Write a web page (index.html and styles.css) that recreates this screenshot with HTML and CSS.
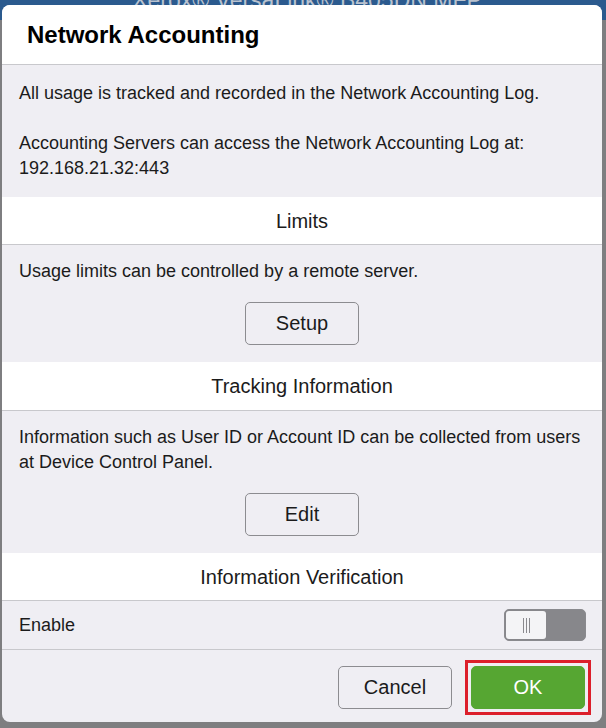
FILE: index.html
```html
<!DOCTYPE html>
<html lang="en">
<head>
    <meta charset="UTF-8">
    <meta name="viewport" content="width=device-width, initial-scale=1.0">
    <title>Network Accounting</title>
    <link rel="stylesheet" href="styles.css">
</head>
<body>
<header class="app-bar">Xerox® VersaLink® B405DN MFP</header>
<div class="page-behind"></div>

<div class="modal" role="dialog" aria-labelledby="modalTitle">
    <div class="modal-header">
        <h1 id="modalTitle">Network Accounting</h1>
    </div>

    <div class="modal-body">
        <section class="block intro">
            <p>All usage is tracked and recorded in the Network Accounting Log.</p>
            <p>Accounting Servers can access the Network Accounting Log at:<br>192.168.21.32:443</p>
        </section>

        <h2 class="group-title">Limits</h2>
        <section class="block">
            <p>Usage limits can be controlled by a remote server.</p>
            <div class="center">
                <button type="button" class="btn">Setup</button>
            </div>
        </section>

        <h2 class="group-title tall">Tracking Information</h2>
        <section class="block">
            <p>Information such as User ID or Account ID can be collected from users at Device Control Panel.</p>
            <div class="center">
                <button type="button" class="btn">Edit</button>
            </div>
        </section>

        <h2 class="group-title">Information Verification</h2>
        <div class="row">
            <span>Enable</span>
            <button type="button" class="toggle" aria-pressed="false" aria-label="Enable">
                <span class="knob"><i></i><i></i><i></i></span>
            </button>
        </div>
    </div>

    <div class="modal-footer">
        <button type="button" class="btn">Cancel</button>
        <span class="focus-ring">
            <button type="button" class="btn btn-primary">OK</button>
        </span>
    </div>
</div>
</body>
</html>
```

FILE: styles.css
```css
:root {
    --panel: #efeef3;
    --line: #c8c8cc;
    --text: #1b1b1b;
    --green: #56a632;
}
body {
    margin: 0;
    height: 728px;
    overflow: hidden;
    background: #7e7e80;
    font-family: 'Liberation Sans', Arial, sans-serif;
    color: var(--text);
}
.app-bar {
    height: 20px;
    background: #2b5a8e;
    color: #b9c2cf;
    font-size: 23px;
    line-height: 0;
    text-align: center;
    padding-left: 8px;
}
.page-behind {
    height: 708px;
}
.modal {
    position: absolute;
    left: 2px;
    top: 5px;
    width: 600px;
    height: 717px;
    background: var(--panel);
    border-radius: 8px;
    overflow: hidden;
    display: flex;
    flex-direction: column;
}
.modal-header {
    background: #fff;
    height: 59px;
    border-bottom: 1px solid var(--line);
    display: flex;
    align-items: center;
    padding: 0 25px;
}
h1 {
    margin: 0;
    font-size: 24px;
    font-weight: bold;
    color: #000;
    padding-top: 1px;
}
.block {
    padding: 14px 17px 17px 17px;
}
.block.intro {
    padding: 16px 17px 16px 17px;
}
.block p {
    margin: 0;
    font-size: 18px;
    line-height: 25px;
}
.block p + p {
    margin-top: 25px;
}
.group-title {
    margin: 0;
    background: #fff;
    height: 47px;
    line-height: 48px;
    border-bottom: 1px solid var(--line);
    text-align: center;
    font-size: 20px;
    font-weight: normal;
}
.group-title.tall {
    height: 48px;
}
.center {
    display: flex;
    justify-content: center;
    margin-top: 18px;
}
.btn {
    width: 114px;
    height: 43px;
    border: 1px solid #8c8c90;
    border-radius: 5px;
    background: var(--panel);
    font-family: inherit;
    font-size: 20px;
    color: var(--text);
    cursor: pointer;
    padding: 0;
}
.row {
    height: 48px;
    border-bottom: 1px solid var(--line);
    display: flex;
    align-items: center;
    justify-content: space-between;
    padding: 0 16px 0 17px;
    font-size: 18px;
}
.toggle {
    width: 82px;
    height: 32px;
    border: 1px solid #8a8a8e;
    border-radius: 5px;
    background: #87878b;
    padding: 1px;
    display: flex;
    cursor: pointer;
}
.knob {
    width: 40px;
    height: 28px;
    background: #f4f4f6;
    border-radius: 3px;
    display: flex;
    justify-content: center;
    align-items: center;
    gap: 2px;
}
.knob i {
    width: 1px;
    height: 15px;
    background: #8a8a8e;
}
.modal-footer {
    flex: 1;
    display: flex;
    justify-content: flex-end;
    align-items: flex-start;
    gap: 13px;
    padding: 10px 11px 0 0;
}
.modal-footer > .btn {
    margin-top: 6px;
}
.btn-primary {
    background: var(--green);
    border-color: var(--green);
    color: #fff;
}
.focus-ring {
    display: flex;
    border: 3px solid #dc1f2b;
    padding: 3px;
}
```
